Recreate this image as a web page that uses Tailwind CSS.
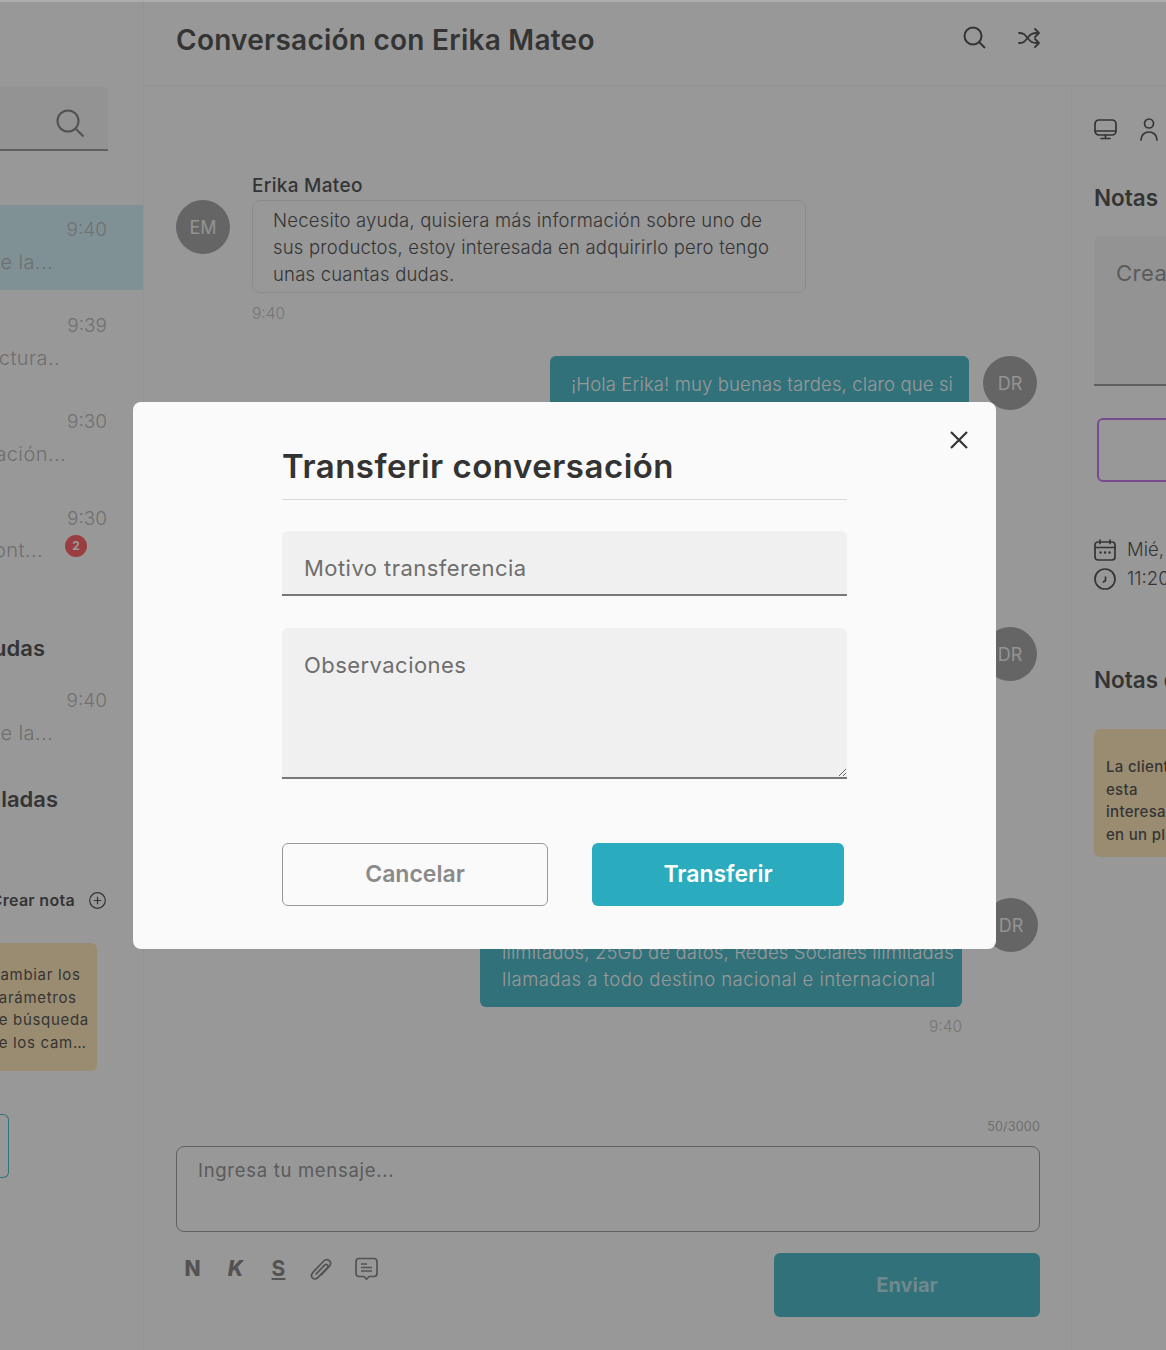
<!DOCTYPE html>
<html lang="es">
<head>
  <meta charset="UTF-8">
  <title>Conversación con Erika Mateo</title>
  <script src="https://cdn.jsdelivr.net/npm/@tailwindcss/browser@4"></script>
</head>
<body class="font-[Inter,sans-serif] bg-[#fafafa] text-[#333333]">
  <div class="relative w-[1166px] h-[1350px] overflow-hidden flex">

    <!-- bandeja izquierda, recortada por la ventana -->
    <aside class="w-[144px] h-full shrink-0 border-r border-[#f0f0f0] flex flex-col overflow-hidden pt-[86px]">
      <div class="w-[108px] h-[65px] shrink-0 bg-[#f0f0f0] border-b-2 border-[#8a8a8a] rounded-tr-md flex items-center justify-end pr-[23px] pt-[11px]">
        <svg class="w-[30px] h-[30px] text-[#6a6a6a]" viewBox="0 0 30 30" fill="none" stroke="currentColor" stroke-width="2"><circle cx="13" cy="13" r="10.5"/><path d="M21 21l7.5 7.5"/></svg>
      </div>

      <div class="mt-[54px] h-[85px] shrink-0 bg-[#c8ecf4] flex flex-col items-end pr-[36px] pt-[13px]">
        <span class="text-[19px] leading-[24px] font-light text-[#acacac]">9:40</span>
        <span class="mt-[6px] mr-[54px] text-[20px] tracking-[0.4px] leading-[28px] font-light text-[#a8a8a8] whitespace-nowrap">Quisiera saber de la...</span>
      </div>
      <div class="mt-[11px] h-[85px] shrink-0 flex flex-col items-end pr-[36px] pt-[13px]">
        <span class="text-[19px] leading-[24px] font-light text-[#acacac]">9:39</span>
        <span class="mt-[6px] mr-[47px] text-[20px] tracking-[0.4px] leading-[28px] font-light text-[#a8a8a8] whitespace-nowrap">Revisar mi factura..</span>
      </div>
      <div class="mt-[11px] h-[85px] shrink-0 flex flex-col items-end pr-[36px] pt-[13px]">
        <span class="text-[19px] leading-[24px] font-light text-[#acacac]">9:30</span>
        <span class="mt-[6px] mr-[41px] text-[20px] tracking-[0.4px] leading-[28px] font-light text-[#a8a8a8] whitespace-nowrap">Más información...</span>
      </div>
      <div class="mt-[11px] h-[85px] shrink-0 flex flex-col items-end pr-[36px] pt-[14px]">
        <span class="text-[19px] leading-[24px] font-light text-[#acacac]">9:30</span>
        <div class="mt-[5px] mr-[20px] flex items-center gap-[22px]">
          <span class="text-[20px] tracking-[0.4px] leading-[28px] font-light text-[#a8a8a8] whitespace-nowrap">Quiero cont...</span>
          <span class="w-[22px] h-[22px] -mt-[8px] shrink-0 rounded-full bg-[#ff444a] text-white text-[12px] font-bold flex items-center justify-center">2</span>
        </div>
      </div>

      <div class="mt-[55px] h-[30px] shrink-0 flex justify-end pr-[98px]">
        <span class="text-[22px] leading-[30px] font-semibold whitespace-nowrap">Ayudas</span>
      </div>
      <div class="mt-[13px] h-[85px] shrink-0 flex flex-col items-end pr-[36px] pt-[13px]">
        <span class="text-[19px] leading-[24px] font-light text-[#acacac]">9:40</span>
        <span class="mt-[6px] mr-[54px] text-[20px] tracking-[0.4px] leading-[28px] font-light text-[#a8a8a8] whitespace-nowrap">Quisiera saber de la...</span>
      </div>
      <div class="mt-[23px] h-[30px] shrink-0 flex justify-end pr-[85px]">
        <span class="text-[22px] leading-[30px] font-semibold whitespace-nowrap">Escaladas</span>
      </div>

      <div class="mt-[74px] h-[24px] shrink-0 flex items-center justify-end pr-[37px] gap-[14px]">
        <span class="text-[16px] font-semibold tracking-[0.3px] whitespace-nowrap">Crear nota</span>
        <svg class="w-[17px] h-[17px] shrink-0" viewBox="0 0 17 17" fill="none" stroke="currentColor" stroke-width="1.2"><circle cx="8.500" cy="8.500" r="7.800"/><path d="M8.500 4.800v7.400M4.800 8.500h7.400"/></svg>
      </div>
      <div class="mt-[31px] w-[97px] h-[128px] shrink-0 bg-[#ffe3ac] rounded-r-md flex justify-end pr-[8px] pt-[21px]">
        <p class="text-[15px] leading-[22.700px] tracking-[0.7px] whitespace-nowrap">Cambiar los<br>parámetros<br>de búsqueda<br>de los cam…</p>
      </div>
      <div class="mt-[43px] w-[9px] h-[64px] shrink-0 border border-l-0 border-[#2aacbe] rounded-r-md"></div>
    </aside>

    <div class="flex-1 flex flex-col min-w-0">
      <header class="h-[86px] shrink-0 border-b border-[#f0f0f0] flex items-center justify-between pl-[32px] pr-[125px]">
        <h1 class="text-[28px] font-semibold tracking-[0.25px] leading-[80px] -mt-[6px] whitespace-nowrap">Conversación con Erika Mateo</h1>
        <div class="flex items-center gap-[32px] -mt-[10px]">
          <svg class="w-[23px] h-[23px]" viewBox="0 0 23 23" fill="none" stroke="currentColor" stroke-width="2"><circle cx="10" cy="10" r="8.500"/><path d="M16 16l6 6"/></svg>
          <svg class="w-[23px] h-[22px]" viewBox="0 0 23 22" fill="none" stroke="currentColor" stroke-width="1.800" stroke-linecap="round" stroke-linejoin="round"><path d="M1 6c5 0 6 2 8.500 5s4 5 9.500 5"/><path d="M1 16c5 0 6-2 8.500-5s4-5 9.500-5"/><path d="M17 2l4 4-4 4"/><path d="M17 12l4 4-4 4"/></svg>
        </div>
      </header>

      <div class="flex-1 flex min-h-0">
        <main class="w-[928px] shrink-0 border-r border-[#f0f0f0] pl-[32px] pr-[31px] flex flex-col">
          <div class="flex gap-[22px] mt-[87px] h-[183px] shrink-0">
            <div class="w-[54px] h-[54px] mt-[27px] rounded-full bg-[#959595] text-[#f0f0f0] text-[18px] flex items-center justify-center shrink-0">EM</div>
            <div>
              <div class="text-[19px] leading-[25px] mb-[2px] font-medium tracking-[0.3px]">Erika Mateo</div>
              <div class="w-[554px] h-[93px] border border-[#e0e0e0] rounded-lg pl-[20px] pt-[6px] text-[18.500px] tracking-[0.2px] leading-[27px] font-light whitespace-nowrap">Necesito ayuda, quisiera más información sobre uno de<br>sus productos, estoy interesada en adquirirlo pero tengo<br>unas cuantas dudas.</div>
              <div class="mt-[10px] text-[15.500px] leading-[22px] font-light text-[#b4b4b4]">9:40</div>
            </div>
          </div>

          <div class="h-[271px] shrink-0 flex justify-end gap-[14px] pr-[3px]">
            <div class="w-[419px] h-[120px] bg-[#2aacbe] rounded-md pl-[21px] pt-[15px] text-[18.500px] tracking-[0.13px] leading-[27px] font-light text-[#fafafa] whitespace-nowrap">¡Hola Erika! muy buenas tardes, claro que si<br>con gusto te ayudo</div>
            <div class="w-[54px] h-[54px] rounded-full bg-[#959595] text-[#f0f0f0] text-[18px] flex items-center justify-center shrink-0">DR</div>
          </div>
          <div class="h-[271px] shrink-0 flex justify-end gap-[14px] pr-[3px]">
            <div class="w-[419px] h-[120px] bg-[#2aacbe] rounded-md pl-[21px] pt-[15px] text-[18.500px] tracking-[0.13px] leading-[27px] font-light text-[#fafafa] whitespace-nowrap">¿Qué tipo de plan estás buscando?</div>
            <div class="w-[54px] h-[54px] rounded-full bg-[#959595] text-[#f0f0f0] text-[18px] flex items-center justify-center shrink-0">DR</div>
          </div>
          <div class="h-[221px] shrink-0 flex justify-end gap-[22px] pr-[2px]">
            <div class="flex flex-col items-end">
              <div class="w-[482px] h-[109px] bg-[#2aacbe] rounded-md pl-[22px] pt-[14px] text-[18.500px] leading-[27px] font-light text-[#fafafa] whitespace-nowrap">Tenemos un plan ideal para ti, con minutos<br><span class="tracking-[0.14px]">ilimitados, 25Gb de datos, Redes Sociales ilimitadas</span><br><span class="tracking-[0.45px]">llamadas a todo destino nacional e internacional</span></div>
              <div class="mt-[9px] text-[15.500px] leading-[22px] font-light text-[#b4b4b4]">9:40</div>
            </div>
            <div class="w-[54px] h-[54px] rounded-full bg-[#959595] text-[#f0f0f0] text-[18px] flex items-center justify-center shrink-0">DR</div>
          </div>

          <div class="text-right text-[12.500px] tracking-[0.2px] leading-[16px] text-[#a8a8a8]">50/3000</div>
          <textarea placeholder="Ingresa tu mensaje..." class="mt-[11px] w-full h-[86px] shrink-0 border border-[#8a8a8a] rounded-lg px-[21px] py-[10px] text-[18.500px] tracking-[0.7px] leading-[27px] resize-none placeholder:text-[#808080] bg-transparent"></textarea>
          <div class="flex items-start justify-between mt-[21px]">
            <div class="flex items-center h-[32px] text-[#707070]">
              <span class="w-[33px] text-center text-[21px] font-extrabold">N</span>
              <span class="w-[53px] text-center text-[21px] font-extrabold italic">K</span>
              <span class="w-[33px] text-center text-[21px] font-bold underline underline-offset-2">S</span>
              <svg class="w-[22px] h-[24px] ml-[15px]" viewBox="0 0 22 24" fill="none" stroke="currentColor" stroke-width="1.700" stroke-linecap="round"><path d="M19.500 3.800c-1.700-1.800-4-1.600-5.700.2L3.400 14.800c-2.200 2.300-2.400 4.700-.9 6.200s3.800 1.200 5.800-.9l8.800-9.100c1-1.100 1.100-2.300.3-3.100s-2-.6-3 .4l-8.200 8.600"/><path d="M19.500 3.800c1.600 1.800 1.300 4-.4 5.800l-7.900 8.200"/></svg>
              <svg class="w-[23px] h-[24px] ml-[23px]" viewBox="0 0 23 24" fill="none" stroke="currentColor" stroke-width="1.700" stroke-linejoin="round"><path d="M4 1.500h15a3 3 0 013 3v12a3 3 0 01-3 3h-5l-2.500 2.800L9 19.500H4a3 3 0 01-3-3v-12a3 3 0 013-3z"/><path d="M6 7h6M6 10.500h11M6 14h11"/></svg>
            </div>
            <button class="w-[266px] h-[64px] bg-[#2aacbe] rounded-md text-[20px] font-bold text-white/60">Enviar</button>
          </div>
        </main>

        <!-- panel derecho, recortado por la ventana -->
        <aside class="flex-1 min-w-0 overflow-hidden pl-[22px] relative">
          <div class="w-[300px]">
            <div class="flex items-center gap-[23px] mt-[31px] h-[24px]">
              <svg class="w-[23px] h-[21px]" viewBox="0 0 23 21" fill="none" stroke="currentColor" stroke-width="1.700" stroke-linecap="round"><rect x="1" y="1" width="21" height="15" rx="4"/><path d="M1 12h21M11.500 16v3.500M7 19.500h9"/></svg>
              <svg class="w-[18px] h-[23px]" viewBox="0 0 18 23" fill="none" stroke="currentColor" stroke-width="1.700" stroke-linecap="round"><circle cx="9" cy="5.500" r="4.500"/><path d="M1 22c0-5 3.500-8 8-8s8 3 8 8"/></svg>
            </div>
            <h2 class="mt-[42px] text-[22.500px] leading-[30px] font-semibold whitespace-nowrap">Notas</h2>
            <div class="mt-[23px] h-[150px] bg-[#f0f0f0] border-b-2 border-[#8a8a8a] rounded-t-md pl-[22px] pt-[20px] text-[22px] tracking-[0.5px] leading-[34px] text-[#808080] whitespace-nowrap">Crear nota</div>
            <div class="mt-[32px] ml-[3px] h-[64px] border-2 border-[#b862e8] rounded-md"></div>
            <div class="mt-[54px] flex items-center gap-[11px] h-[28px] text-[18.500px] font-light whitespace-nowrap">
              <svg class="w-[22px] h-[22px] shrink-0" viewBox="0 0 22 22" fill="none" stroke="currentColor" stroke-width="1.700" stroke-linecap="round"><rect x="1" y="3" width="20" height="18" rx="3"/><path d="M1 8.500h20M6 1v3.500M16 1v3.500"/><path d="M6.500 13.500h.1M11 13.500h.1M15.500 13.500h.1" stroke-width="2.400"/></svg>
              <span>Mié, 12 de mayo</span>
            </div>
            <div class="flex items-center gap-[11px] h-[29px] text-[18.500px] font-light whitespace-nowrap">
              <svg class="w-[22px] h-[22px] shrink-0" viewBox="0 0 22 22" fill="none" stroke="currentColor" stroke-width="1.700" stroke-linecap="round"><circle cx="11" cy="11" r="10"/><path d="M11.500 9v3.500L9.500 14"/></svg>
              <span>11:20 am</span>
            </div>
            <h2 class="mt-[72px] text-[22.500px] leading-[30px] font-semibold whitespace-nowrap">Notas de la conversación</h2>
            <div class="mt-[34px] h-[128px] bg-[#ffe3ac] rounded-md pl-[12px] pt-[27px] text-[15px] tracking-[0.3px] leading-[22.700px] font-medium whitespace-nowrap">La cliente<br>esta<br>interesada<br>en un plan</div>
          </div>
        </aside>
      </div>
    </div>

    <!-- velo del modal -->
    <div class="absolute inset-0 bg-[#363636]/50 border-t-2 border-white/20"></div>

    <div class="absolute left-[133px] top-[402px] w-[863px] h-[547px] bg-[#fafafa] rounded-lg pl-[149px] pt-[42px]">
      <button class="absolute left-[816px] top-[28px] text-[#333333]" aria-label="Cerrar">
        <svg class="w-[20px] h-[20px]" viewBox="0 0 20 20" fill="none" stroke="currentColor" stroke-width="2.200"><path d="M2 2l16 16M18 2L2 18"/></svg>
      </button>
      <div class="w-[565px]">
        <h2 class="text-[33px] tracking-[0.5px] leading-[44px] h-[56px] font-semibold border-b border-[#d9d9d9]">Transferir conversación</h2>
        <input placeholder="Motivo transferencia" class="block mt-[31px] w-full h-[65px] bg-[#f0f0f0] border-b-2 border-[#777777] rounded-t-md px-[22px] pt-[10px] text-[22px] tracking-[0.45px] placeholder:text-[#6e6e6e]">
        <textarea placeholder="Observaciones" class="block mt-[32px] w-full h-[151px] bg-[#f0f0f0] border-b-2 border-[#777777] rounded-t-md px-[22px] pt-[20px] text-[22px] tracking-[0.45px] leading-[34px] placeholder:text-[#6e6e6e]"></textarea>
        <div class="flex mt-[64px]">
          <button class="w-[266px] h-[63px] border border-[#999999] rounded-md text-[23px] font-semibold text-[#8a8a8a]">Cancelar</button>
          <button class="ml-[44px] w-[252px] h-[63px] bg-[#2aacbe] rounded-md text-[23px] font-semibold text-white">Transferir</button>
        </div>
      </div>
    </div>
  </div>
</body>
</html>
